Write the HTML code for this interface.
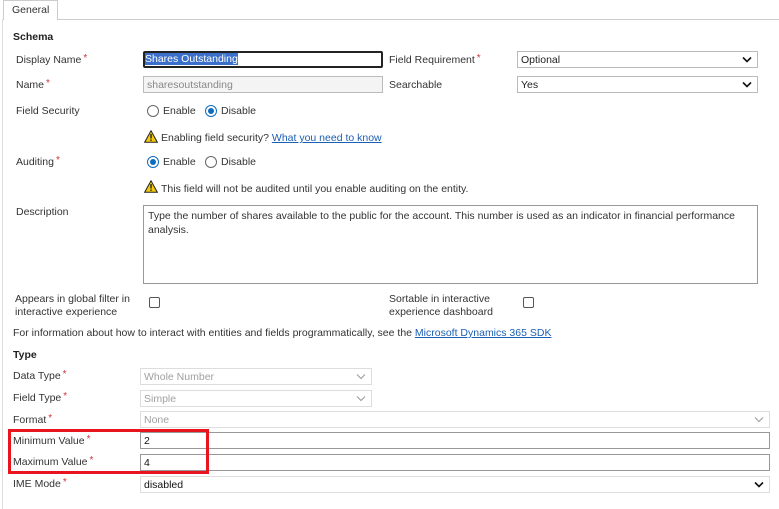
<!DOCTYPE html>
<html><head><style>
*{margin:0;padding:0;box-sizing:border-box}
body{width:779px;height:509px;background:#fff;position:relative;overflow:hidden;font-family:"Liberation Sans",sans-serif;font-size:10.5px;color:#333}
.a{position:absolute;white-space:nowrap;line-height:13px}
.s{color:#d13438;font-size:10px;vertical-align:top;position:relative;top:-2px;margin-left:2px}
.box{position:absolute;border:1px solid #bbb;background:#fff;height:17px;line-height:15px;padding-left:3px;padding-top:1px}
.dis{color:#a0a0a0;border-color:#ddd}
.chev{position:absolute;right:5px;top:4px;width:10px;height:7px}
.radio{position:absolute;width:12px;height:12px;border:1px solid #666;border-radius:50%;background:#fff}
.radio.on{border-color:#0f6cbd}
.radio.on:after{content:"";position:absolute;left:2px;top:2px;width:6px;height:6px;border-radius:50%;background:#0f6cbd}
.cb{position:absolute;width:11px;height:11px;border:1px solid #555;border-radius:2px}
a{color:#1a5fb4;text-decoration:underline}
</style></head><body>
<div style="position:absolute;left:3px;top:0;width:55px;height:20px;border:1px solid #ccc;border-bottom:none;background:#fff"></div>
<div class="a" style="left:12px;top:4px">General</div>
<div style="position:absolute;left:58px;top:19px;width:721px;height:1px;background:#ccc"></div>
<div style="position:absolute;left:2px;top:19px;width:1px;height:490px;background:#ddd"></div>

<div class="a" style="left:13px;top:31px;font-weight:bold;color:#222">Schema</div>

<div class="a" style="left:16px;top:54px">Display Name<span class="s">*</span></div>
<div class="box" style="left:143px;top:51px;width:240px;border:2px solid #222;border-radius:2px;line-height:13px;padding-left:0;padding-top:0"><span style="background:#3a70c9;color:#fff">Shares Outstanding</span></div>
<div class="a" style="left:389px;top:54px">Field Requirement<span class="s">*</span></div>
<div class="box" style="left:517px;top:51px;width:241px;color:#222">Optional<svg class="chev" viewBox="0 0 10 7"><path d="M1 1.5L5 5.5 9 1.5" stroke="#111" stroke-width="1.6" fill="none"/></svg></div>

<div class="a" style="left:16px;top:79px">Name<span class="s">*</span></div>
<div class="box" style="left:143px;top:76px;width:240px;background:#f4f4f4;color:#888">sharesoutstanding</div>
<div class="a" style="left:389px;top:79px">Searchable</div>
<div class="box" style="left:517px;top:76px;width:241px;color:#222">Yes<svg class="chev" viewBox="0 0 10 7"><path d="M1 1.5L5 5.5 9 1.5" stroke="#111" stroke-width="1.6" fill="none"/></svg></div>

<div class="a" style="left:16px;top:105px">Field Security</div>
<div class="radio" style="left:147px;top:105px"></div><div class="a" style="left:163px;top:105px">Enable</div>
<div class="radio on" style="left:205px;top:105px"></div><div class="a" style="left:221px;top:105px">Disable</div>

<svg style="position:absolute;left:144px;top:130px" width="14" height="13" viewBox="0 0 14 13"><path d="M7 0.8L13.3 12.2H0.7Z" fill="#f2c811" stroke="#222" stroke-width="1"/><rect x="6.3" y="4" width="1.4" height="4.5" fill="#222"/><rect x="6.3" y="9.5" width="1.4" height="1.4" fill="#222"/></svg>
<div class="a" style="left:161px;top:132px">Enabling field security? <a>What you need to know</a></div>

<div class="a" style="left:16px;top:156px">Auditing<span class="s">*</span></div>
<div class="radio on" style="left:147px;top:156px"></div><div class="a" style="left:163px;top:156px">Enable</div>
<div class="radio" style="left:205px;top:156px"></div><div class="a" style="left:221px;top:156px">Disable</div>

<svg style="position:absolute;left:144px;top:180px" width="14" height="13" viewBox="0 0 14 13"><path d="M7 0.8L13.3 12.2H0.7Z" fill="#f2c811" stroke="#222" stroke-width="1"/><rect x="6.3" y="4" width="1.4" height="4.5" fill="#222"/><rect x="6.3" y="9.5" width="1.4" height="1.4" fill="#222"/></svg>
<div class="a" style="left:161px;top:183px">This field will not be audited until you enable auditing on the entity.</div>

<div class="a" style="left:16px;top:206px">Description</div>
<div style="position:absolute;left:143px;top:205px;width:615px;height:79px;border:1px solid #999;padding:3px 4px;line-height:14px;color:#333;white-space:normal">Type the number of shares available to the public for the account. This number is used as an indicator in financial performance analysis.</div>

<div class="a" style="left:15px;top:293px">Appears in global filter in<br>interactive experience</div>
<div class="cb" style="left:149px;top:297px"></div>
<div class="a" style="left:389px;top:293px">Sortable in interactive<br>experience dashboard</div>
<div class="cb" style="left:523px;top:297px"></div>

<div class="a" style="left:13px;top:327px">For information about how to interact with entities and fields programmatically, see the <a>Microsoft Dynamics 365 SDK</a></div>

<div class="a" style="left:13px;top:349px;font-weight:bold;color:#222">Type</div>

<div class="a" style="left:13px;top:370px">Data Type<span class="s">*</span></div>
<div class="box dis" style="left:140px;top:368px;width:232px">Whole Number<svg class="chev" viewBox="0 0 10 7"><path d="M1 1.5L5 5.5 9 1.5" stroke="#999" stroke-width="1" fill="none"/></svg></div>
<div class="a" style="left:13px;top:392px">Field Type<span class="s">*</span></div>
<div class="box dis" style="left:140px;top:390px;width:232px">Simple<svg class="chev" viewBox="0 0 10 7"><path d="M1 1.5L5 5.5 9 1.5" stroke="#999" stroke-width="1" fill="none"/></svg></div>
<div class="a" style="left:13px;top:414px">Format<span class="s">*</span></div>
<div class="box dis" style="left:140px;top:411px;width:630px">None<svg class="chev" viewBox="0 0 10 7"><path d="M1 1.5L5 5.5 9 1.5" stroke="#999" stroke-width="1" fill="none"/></svg></div>
<div class="a" style="left:13px;top:435px">Minimum Value<span class="s">*</span></div>
<div class="box" style="left:140px;top:432px;width:630px;border-color:#999;color:#111">2</div>
<div class="a" style="left:13px;top:456px">Maximum Value<span class="s">*</span></div>
<div class="box" style="left:140px;top:454px;width:630px;border-color:#999;color:#111">4</div>
<div class="a" style="left:13px;top:478px">IME Mode<span class="s">*</span></div>
<div class="box" style="left:140px;top:476px;width:630px;border-color:#ddd;color:#111">disabled<svg class="chev" viewBox="0 0 10 7"><path d="M1 1.5L5 5.5 9 1.5" stroke="#111" stroke-width="1.6" fill="none"/></svg></div>

<div style="position:absolute;left:8px;top:429px;width:201px;height:45px;border:3px solid #e8141e"></div>
</body></html>
